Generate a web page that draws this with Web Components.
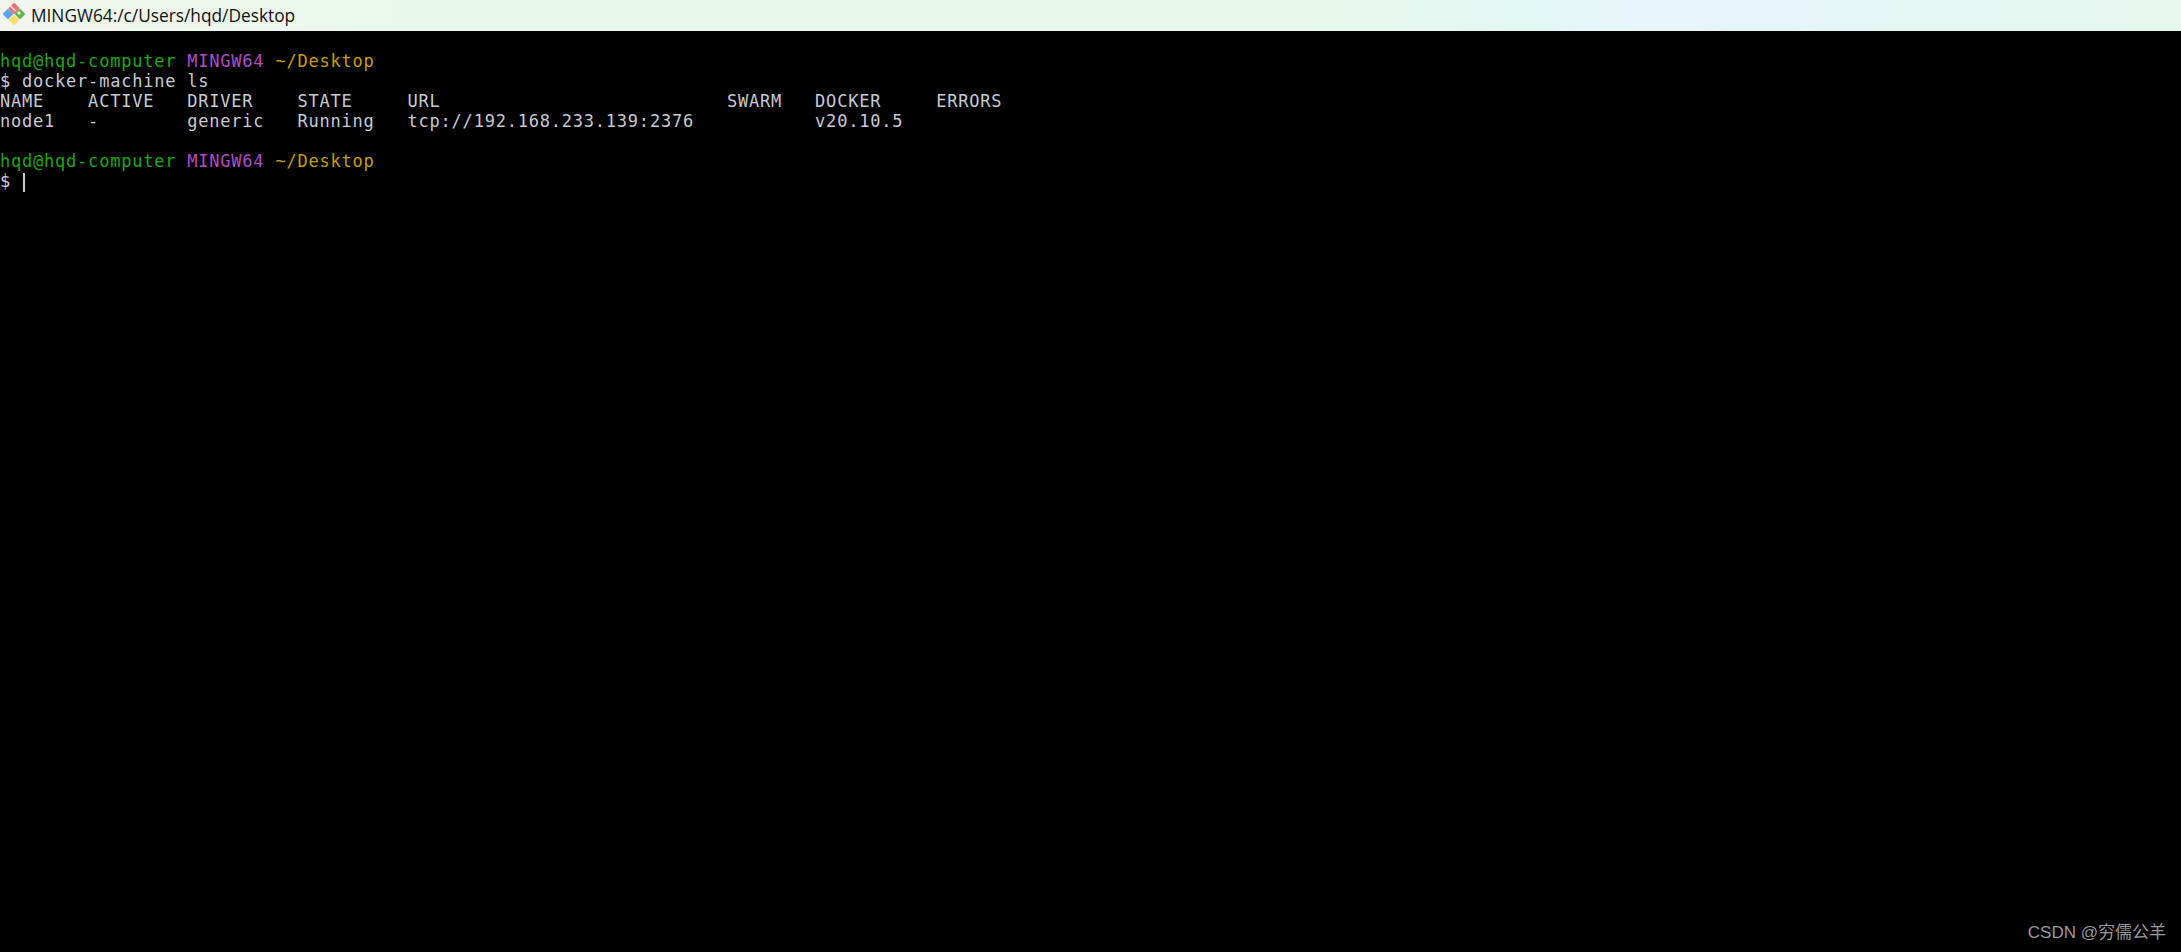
<!DOCTYPE html>
<html>
<head>
<meta charset="utf-8">
<title>MINGW64:/c/Users/hqd/Desktop</title>
<style>
  html, body { margin: 0; height: 100%; background: #000; overflow: hidden; }
</style>
</head>
<body>
<mintty-window title="MINGW64:/c/Users/hqd/Desktop">
  <term-line></term-line>
  <term-prompt></term-prompt>
  <term-line>$ docker-machine ls</term-line>
  <term-line>NAME    ACTIVE   DRIVER    STATE     URL                          SWARM   DOCKER     ERRORS</term-line>
  <term-line>node1   -        generic   Running   tcp://192.168.233.139:2376           v20.10.5</term-line>
  <term-line></term-line>
  <term-prompt></term-prompt>
  <term-line>$ <term-cursor></term-cursor></term-line>
</mintty-window>
<water-mark>CSDN @穷儒公羊</water-mark>

<script>
"use strict";

(function () {
  class MinttyWindow extends HTMLElement {
    constructor() {
      super();
      const shadow = this.attachShadow({ mode: "open" });
      shadow.innerHTML = `
        <style>
          :host {
            display: flex;
            flex-direction: column;
            height: 100vh;
            background: #000;
          }
          .bar {
            flex: 0 0 31px;
            display: flex;
            align-items: center;
            gap: 4px;
            padding-left: 1px;
            background: linear-gradient(90deg, #f2f5ef 0%, #e9f8ec 19.7%, #e8f8ec 59.6%, #e2f8f5 70.6%, #e8f5fb 75.6%, #e6f5fa 82%, #e2f7f4 87%, #e5f7ee 100%);
            color: #111;
            font: 17.3px "Open Sans", "Liberation Sans", sans-serif;
          }
          svg { width: 26px; height: 26px; flex: none; margin-bottom: 3px; }
          .screen { flex: 1; }
        </style>
        <div class="bar">
          <svg viewBox="0 0 26 26" stroke-linejoin="round" stroke-width="2">
            <path d="M13 3 L17.5 7.5 L13 12 L8.5 7.5 Z" fill="#ee6f74" stroke="#ee6f74"/>
            <path d="M7 9 L11 13 L7 17 L3 13 Z" fill="#5fa4ee" stroke="#5fa4ee"/>
            <path d="M19 9 L23 13 L19 17 L15 13 Z" fill="#5fb850" stroke="#5fb850"/>
            <path d="M13 15 L17 19 L13 23 L9 19 Z" fill="#fbdc68" stroke="#fbdc68"/>
            <path d="M9.5 5 L14.5 10" stroke="#f4efe8" stroke-width="1.5" fill="none"/>
            <circle cx="18" cy="12" r="1.6" fill="#eef5ec"/>
          </svg>
          <span class="title"></span>
        </div>
        <div class="screen"><slot></slot></div>
      `;
      shadow.querySelector(".title").textContent = this.getAttribute("title");
    }
  }

  // no white-space: pre on the host, it would show the indentation of the template
  class TermLine extends HTMLElement {
    constructor() {
      super();
      this.attachShadow({ mode: "open" }).innerHTML = `
        <style>
          :host {
            display: block;
            height: 20px;
            color: #c6cbd0;
            font: 17px/20px "DejaVu Sans Mono", monospace;
            letter-spacing: 0.78px;
          }
          .txt { white-space: pre; }
        </style>
        <span class="txt"><slot></slot></span>
      `;
    }
  }

  class TermPrompt extends HTMLElement {
    constructor() {
      super();
      this.attachShadow({ mode: "open" }).innerHTML = `
        <style>
          :host {
            display: block;
            height: 20px;
            font: 17px/20px "DejaVu Sans Mono", monospace;
            letter-spacing: 0.78px;
          }
          .txt { white-space: pre; }
          .user { color: #1ca80e; }
          .sys { color: #b04cc8; }
          .dir { color: #c49e00; }
        </style>
        <span class="txt"><span class="user">hqd@hqd-computer</span> <span class="sys">MINGW64</span> <span class="dir">~/Desktop</span></span>
      `;
    }
  }

  class TermCursor extends HTMLElement {
    constructor() {
      super();
      this.attachShadow({ mode: "open" }).innerHTML = `<style>
          :host {
            display: inline-block;
            width: 2px;
            height: 19px;
            margin-left: 1px;
            vertical-align: -5px;
            background: #c8ccd0;
          }
        </style>`;
    }
  }

  class WaterMark extends HTMLElement {
    constructor() {
      super();
      this.attachShadow({ mode: "open" }).innerHTML = `
        <style>
          :host {
            position: absolute;
            right: 15px;
            bottom: 8px;
            color: #9a9a9a;
            font: 17px/22px "Liberation Sans", "Noto Sans CJK SC", sans-serif;
          }
        </style>
        <slot></slot>
      `;
    }
  }

  customElements.define("mintty-window", MinttyWindow);
  customElements.define("term-line", TermLine);
  customElements.define("term-prompt", TermPrompt);
  customElements.define("term-cursor", TermCursor);
  customElements.define("water-mark", WaterMark);
})();
</script>
</body>
</html>
